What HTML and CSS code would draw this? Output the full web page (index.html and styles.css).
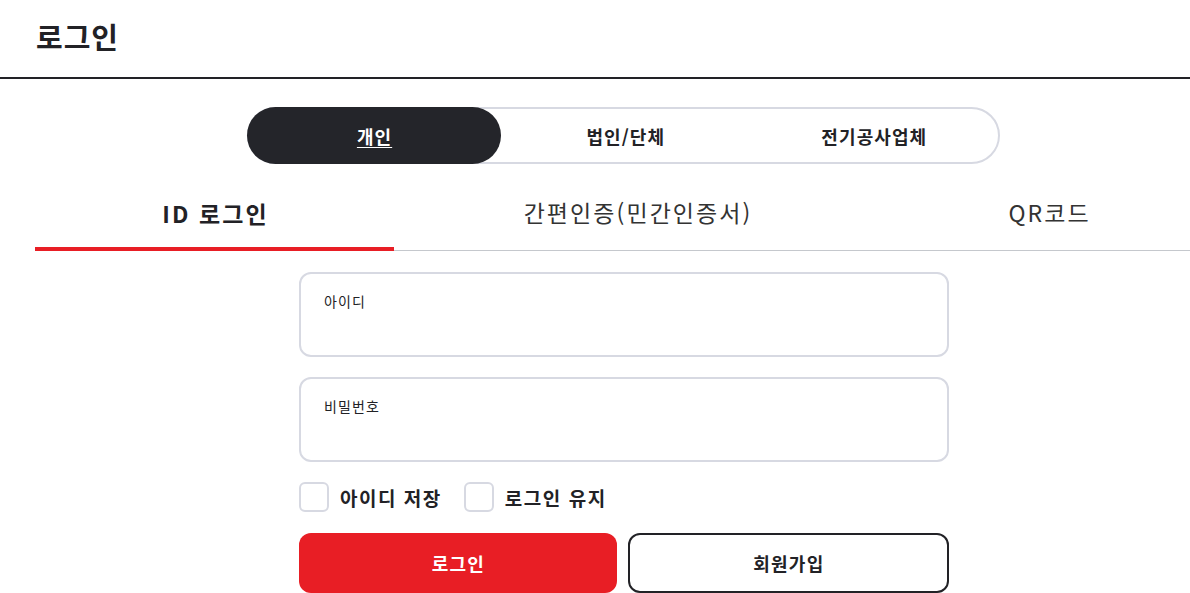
FILE: index.html
```html
<!DOCTYPE html>
<html lang="ko">
<head>
<meta charset="utf-8">
<title>로그인</title>
<link rel="stylesheet" href="styles.css">
</head>
<body>
<header class="page-head">
  <h1 class="page-title">로그인</h1>
</header>
<main class="main">
  <div class="seg">
    <a class="seg-item active">개인</a>
    <a class="seg-item">법인/단체</a>
    <a class="seg-item">전기공사업체</a>
  </div>
  <div class="tabs">
    <div class="tab tab-id active">ID 로그인</div>
    <div class="tab tab-cert">간편인증(민간인증서)</div>
    <div class="tab tab-qr">QR코드</div>
  </div>
  <form class="form">
    <label class="field">
      <span class="field-label">아이디</span>
    </label>
    <label class="field">
      <span class="field-label">비밀번호</span>
    </label>
    <div class="checks">
      <label class="check"><span class="box"></span><span class="check-text">아이디 저장</span></label>
      <label class="check"><span class="box"></span><span class="check-text">로그인 유지</span></label>
    </div>
    <div class="buttons">
      <button type="button" class="btn btn-primary">로그인</button>
      <button type="button" class="btn btn-outline">회원가입</button>
    </div>
  </form>
</main>
</body>
</html>
```
FILE: styles.css
```css
* { box-sizing: border-box; }
html, body { margin: 0; padding: 0; }
body {
  font-family: "Noto Sans CJK KR", "Noto Sans", sans-serif;
  color: #222226;
  background: #fff;
  overflow: hidden;
  width: 1190px;
}
.page-head {
  height: 79px;
  border-bottom: 2px solid #222226;
  padding: 16px 0 0 36px;
}
.page-title {
  margin: 0;
  font-size: 29px;
  font-weight: 700;
  line-height: 40px;
  letter-spacing: 1px;
}
.main {
  padding-top: 28px;
}
.seg {
  width: 753px;
  height: 57px;
  margin: 0 auto 0 247px;
  border: 2px solid #d7d9e2;
  border-radius: 30px;
  display: flex;
}
.seg-item {
  flex: 1 1 0;
  display: flex;
  align-items: center;
  justify-content: center;
  font-size: 18px;
  font-weight: 700;
  letter-spacing: 0.06em;
  text-indent: 0.06em;
  color: #222226;
}
.seg-item.active {
  flex: 0 0 254px;
  background: #24252a;
  color: #fff;
  text-decoration: underline;
  text-underline-offset: 3px;
  border-radius: 30px;
  margin: -2px 0 -2px -2px;
}
.tabs {
  display: flex;
  width: 1182px;
  margin-left: 35px;
  margin-top: 16px;
  height: 71px;
  border-bottom: 1px solid #c5c8cd;
}
.tab {
  display: flex;
  align-items: center;
  justify-content: center;
  font-size: 23px;
  letter-spacing: 0.09em;
  text-indent: 0.09em;
  color: #333;
  padding-bottom: 6px;
}
.tab-id { width: 359px; }
.tab-cert { width: 486px; }
.tab-qr { width: 337px; }
.tab.active {
  font-weight: 700;
  color: #222226;
  border-bottom: 4px solid #e81e25;
  margin-bottom: -1px;
  padding-bottom: 2px;
}
.form {
  width: 650px;
  margin: 21px 0 0 299px;
  display: flex;
  flex-direction: column;
}
.field {
  display: block;
  height: 85px;
  border: 2px solid #d7d9e2;
  border-radius: 12px;
  padding: 14px 23px;
  margin-bottom: 20px;
}
.field-label {
  font-size: 14px;
  line-height: 20px;
  letter-spacing: 0.08em;
  color: #222226;
}
.checks {
  display: flex;
  gap: 22px;
  height: 30px;
}
.check {
  display: flex;
  align-items: center;
  gap: 11px;
}
.box {
  width: 30px;
  height: 30px;
  border: 2px solid #d7d9e2;
  border-radius: 6px;
}
.check-text {
  font-size: 19px;
  font-weight: 700;
  letter-spacing: 0.08em;
}
.buttons {
  display: flex;
  gap: 11px;
  margin-top: 21px;
}
.btn {
  flex: 1 1 0;
  height: 60px;
  border-radius: 12px;
  font-family: inherit;
  font-size: 18px;
  font-weight: 700;
  letter-spacing: 0.07em;
  text-indent: 0.07em;
  cursor: pointer;
}
.btn-primary {
  background: #e81e25;
  color: #fff;
  border: 0;
}
.btn-outline {
  background: #fff;
  color: #222226;
  border: 2px solid #222226;
}
```
